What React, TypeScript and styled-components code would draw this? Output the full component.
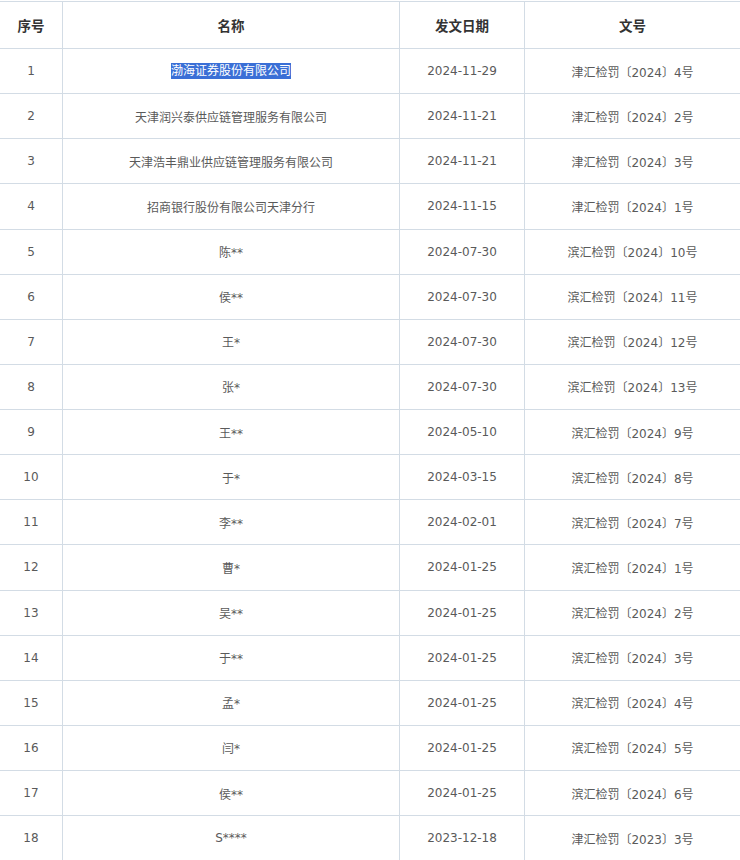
import React from "react";
import styled, { createGlobalStyle } from "styled-components";

const GlobalStyle = createGlobalStyle`
  html, body { margin: 0; padding: 0; background: #ffffff; }
  body { font-family: "DejaVu Sans", "Noto Sans CJK SC", sans-serif; }
`;

const Table = styled.div`
  margin-top: 1px;
  width: 740px;
  border-top: 1px solid #d3dce5;
  font-family: "DejaVu Sans", "Noto Sans CJK SC", sans-serif;
`;

const Row = styled.div<{ $header?: boolean }>`
  display: grid;
  grid-template-columns: 62px 337px 125px 1fr;
  box-sizing: border-box;
  height: ${(p) => (p.$header ? "47px" : "45.125px")};
  border-bottom: 1px solid #d3dce5;
`;

const Cell = styled.div<{ $header?: boolean; $first?: boolean }>`
  display: flex;
  align-items: center;
  justify-content: center;
  box-sizing: border-box;
  border-left: ${(p) => (p.$first ? "none" : "1px solid #d3dce5")};
  font-size: ${(p) => (p.$header ? "13.5px" : "12px")};
  font-weight: ${(p) => (p.$header ? 700 : 400)};
  color: ${(p) => (p.$header ? "#333333" : "#5a5a5a")};
  white-space: nowrap;
`;

const Selected = styled.span`
  background: #3a6fd6;
  color: #ffffff;
  line-height: 16px;
  display: inline-block;
`;

type Item = { name: string; date: string; doc: string };

const rows: Item[] = [
  { name: "渤海证券股份有限公司", date: "2024-11-29", doc: "津汇检罚〔2024〕4号" },
  { name: "天津润兴泰供应链管理服务有限公司", date: "2024-11-21", doc: "津汇检罚〔2024〕2号" },
  { name: "天津浩丰鼎业供应链管理服务有限公司", date: "2024-11-21", doc: "津汇检罚〔2024〕3号" },
  { name: "招商银行股份有限公司天津分行", date: "2024-11-15", doc: "津汇检罚〔2024〕1号" },
  { name: "陈**", date: "2024-07-30", doc: "滨汇检罚〔2024〕10号" },
  { name: "侯**", date: "2024-07-30", doc: "滨汇检罚〔2024〕11号" },
  { name: "王*", date: "2024-07-30", doc: "滨汇检罚〔2024〕12号" },
  { name: "张*", date: "2024-07-30", doc: "滨汇检罚〔2024〕13号" },
  { name: "王**", date: "2024-05-10", doc: "滨汇检罚〔2024〕9号" },
  { name: "于*", date: "2024-03-15", doc: "滨汇检罚〔2024〕8号" },
  { name: "李**", date: "2024-02-01", doc: "滨汇检罚〔2024〕7号" },
  { name: "曹*", date: "2024-01-25", doc: "滨汇检罚〔2024〕1号" },
  { name: "吴**", date: "2024-01-25", doc: "滨汇检罚〔2024〕2号" },
  { name: "于**", date: "2024-01-25", doc: "滨汇检罚〔2024〕3号" },
  { name: "孟*", date: "2024-01-25", doc: "滨汇检罚〔2024〕4号" },
  { name: "闫*", date: "2024-01-25", doc: "滨汇检罚〔2024〕5号" },
  { name: "侯**", date: "2024-01-25", doc: "滨汇检罚〔2024〕6号" },
  { name: "S****", date: "2023-12-18", doc: "津汇检罚〔2023〕3号" },
];

export default function App() {
  return (
    <>
      <GlobalStyle />
      <Table>
        <Row $header>
          <Cell $header $first>序号</Cell>
          <Cell $header>名称</Cell>
          <Cell $header>发文日期</Cell>
          <Cell $header>文号</Cell>
        </Row>
        {rows.map((r, i) => (
          <Row key={i}>
            <Cell $first>{i + 1}</Cell>
            <Cell>{i === 0 ? <Selected>{r.name}</Selected> : r.name}</Cell>
            <Cell>{r.date}</Cell>
            <Cell>{r.doc}</Cell>
          </Row>
        ))}
      </Table>
    </>
  );
}
